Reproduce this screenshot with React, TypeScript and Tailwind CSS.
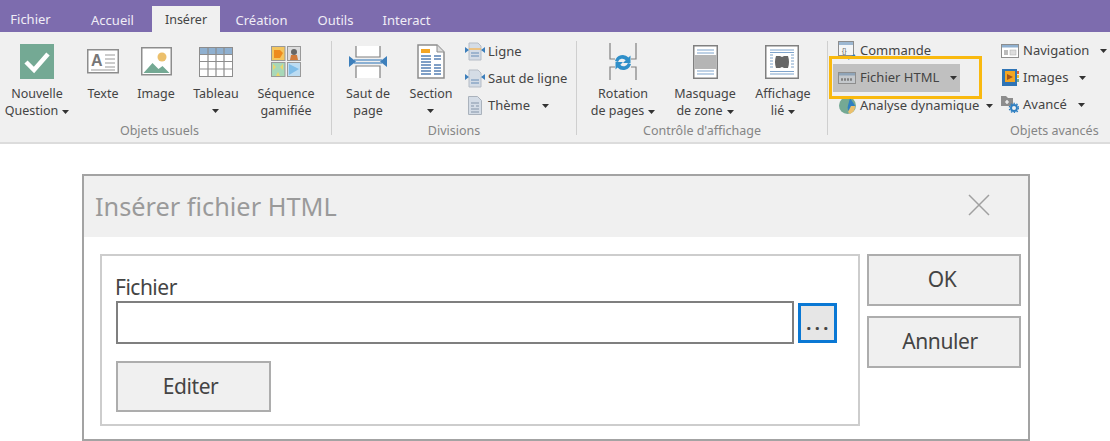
const font = { fontFamily: '"Noto Sans", "Open Sans", sans-serif' };

function Caret({ className = "" }: { className?: string }) {
  return (
    <svg width="7" height="4" viewBox="0 0 7 4" className={`inline-block ${className}`}>
      <path d="M0 0h7L3.5 4z" fill="#333" />
    </svg>
  );
}

function CheckIcon() {
  return (
    <svg width="34" height="35" viewBox="0 0 34 35">
      <rect width="34" height="35" fill="#74a994" />
      <path d="M6 18l8 8L28 10" fill="none" stroke="#fff" strokeWidth="4.5" />
    </svg>
  );
}
function TexteIcon() {
  return (
    <svg width="32" height="25" viewBox="0 0 32 25">
      <rect x="0.75" y="0.75" width="30.5" height="23" fill="#fff" stroke="#8d8d8d" strokeWidth="1.5" />
      <text x="4" y="17" fontSize="16" fontWeight="600" fill="#777" fontFamily="Liberation Sans">A</text>
      <path d="M18 6h10M18 10h10M18 14h10M18 18h10M4 21h24" stroke="#999" strokeWidth="1" />
    </svg>
  );
}
function ImageIcon() {
  return (
    <svg width="31" height="29" viewBox="0 0 31 29">
      <rect x="0.75" y="0.75" width="29.5" height="27" fill="#fff" stroke="#8d8d8d" strokeWidth="1.5" />
      <circle cx="21" cy="10" r="4.5" fill="#ecc06c" />
      <path d="M2.5 26l9-10 6 6 4-3 7 7z" fill="#74a994" />
    </svg>
  );
}
function TableauIcon() {
  return (
    <svg width="34" height="30" viewBox="0 0 34 30">
      <rect x="0.5" y="0.5" width="33" height="29" fill="#fff" stroke="#8d8d8d" />
      <rect x="1" y="1" width="32" height="6" fill="#8fb0d0" />
      <path d="M1 7.5h32M1 14.5h32M1 22h32M9 1v28M17 1v28M25 1v28" stroke="#8d8d8d" strokeWidth="1.2" />
    </svg>
  );
}
function SequenceIcon() {
  return (
    <svg width="30" height="31" viewBox="0 0 30 31">
      <rect x="0.5" y="0.5" width="13.5" height="14" fill="#f4c65f" stroke="#999" />
      <path d="M3 4h6l3 3-3 5H3z" fill="#ee8a1e" />
      <rect x="16.5" y="0.5" width="13" height="14" fill="#ddd" stroke="#999" />
      <circle cx="23" cy="6" r="3" fill="#666" />
      <path d="M19 14l1-5h6l1 5z" fill="#d07a3a" />
      <rect x="0.5" y="16.5" width="13.5" height="14" fill="#a8d8b8" stroke="#999" />
      <path d="M2 18l3 3-3 3zM12 18l-3 3 3 3zM7 26l2 4H5z" fill="#ecd56c" />
      <rect x="16.5" y="16.5" width="13" height="14" fill="#bcdcf2" stroke="#999" />
      <path d="M18 18l10 5-10 6z" fill="#7fbde8" />
    </svg>
  );
}
function SautPageIcon() {
  return (
    <svg width="38" height="32" viewBox="0 0 38 32">
      <path d="M7 0v11h24V0M7 32V20h24v12" fill="#fff" stroke="#808080" strokeWidth="1.2" />
      <path d="M5 14h28M5 17h28" stroke="#6a9bc9" strokeWidth="1.4" />
      <path d="M0 10l7 5.5L0 21zM38 10l-7 5.5 7 5.5z" fill="#3d7fbb" />
    </svg>
  );
}
function SectionIcon() {
  return (
    <svg width="28" height="35" viewBox="0 0 28 35">
      <path d="M1 1h19l7 7v26H1z" fill="#fff" stroke="#8d8d8d" strokeWidth="1.5" />
      <path d="M20 1v7h7" fill="#ddd" stroke="#8d8d8d" />
      <rect x="4" y="5" width="9" height="4" fill="#f5a623" />
      <path d="M4 12h10M4 15h10M4 18h10M4 21h10M4 24h10M4 27h10M4 30h10M17 12h7M17 15h7M17 21h7M17 24h7M17 27h7M17 30h7" stroke="#7f9fc6" strokeWidth="2" />
    </svg>
  );
}
function LigneIcon({ accent = "#f5b75a" }: { accent?: string }) {
  return (
    <svg width="20" height="19" viewBox="0 0 20 19">
      <path d="M4 1h9l3 3v14H4z" fill="#d4dce6" stroke="#b5bcc6" />
      <path d="M4 7h12" stroke={accent} strokeWidth="1.4" />
      <path d="M6 11h8M6 14h8" stroke="#8aa6c6" strokeWidth="1.4" />
      <path d="M0 5l4 3-4 3zM20 5l-4 3 4 3z" fill="#3d7fbb" />
    </svg>
  );
}
function ThemeIcon() {
  return (
    <svg width="14" height="19" viewBox="0 0 14 19">
      <path d="M.5.5h9l4 4v14H.5z" fill="#d4dce6" stroke="#aab2bc" />
      <path d="M3 7h8M3 10h3M8 10h3M3 13h8M3 16h8" stroke="#8494a8" />
    </svg>
  );
}
function RotationIcon() {
  return (
    <svg width="28" height="37" viewBox="0 0 28 37">
      <path d="M1 0v16h5M1 37V24h5" fill="none" stroke="#808080" strokeWidth="1.2" />
      <path d="M27 0v16h-5M27 37V24h-5" fill="none" stroke="#808080" strokeWidth="1.2" />
      <path d="M6 18a8 8 0 0 1 13.500-3.500l2-2v7.500h-7.500l2.700-2.700a4.500 4.500 0 0 0-7.700 1.700zM22 21a8 8 0 0 1-13.500 3.500l-2 2V19h7.500l-2.700 2.700a4.500 4.500 0 0 0 7.700-1.700z" fill="#2f8fc9" />
    </svg>
  );
}
function MasquageIcon() {
  return (
    <svg width="25" height="34" viewBox="0 0 25 34">
      <rect x="0.75" y="0.750" width="23.500" height="32.500" fill="#fff" stroke="#808080" strokeWidth="1.500" />
      <path d="M4 5h17M4 8h17M4 26h17M4 29h17" stroke="#7fa4cc" strokeWidth="1.200" />
      <rect x="1.500" y="10" width="22" height="14" fill="#b5b5b5" />
    </svg>
  );
}
function AffichageIcon() {
  return (
    <svg width="34" height="34" viewBox="0 0 34 34" className="mr-[2px]">
      <rect x="0.750" y="0.750" width="32.500" height="32.500" fill="#fff" stroke="#808080" strokeWidth="1.500" />
      <path d="M5 5h24M5 7.500h24M5 26.500h24M5 29h24M5 10h3M26 10h3M5 13h3M26 13h3M5 16h3M26 16h3M5 19h3M26 19h3M5 22h3M26 22h3" stroke="#7fa4cc" strokeWidth="1.200" />
      <path d="M11 11h4l2 1 2-1h4q2 6 0 12h-4l-2-1-2 1h-4q-2-6 0-12z" fill="#666" />
    </svg>
  );
}
function CommandeIcon() {
  return (
    <svg width="18" height="19" viewBox="0 0 18 19">
      <rect x="0.500" y="0.500" width="15" height="14" fill="#f4f6f8" stroke="#8d8d8d" />
      <rect x="1" y="1" width="14" height="3" fill="#9db8d2" />
      <text x="4" y="12" fontSize="6.500" fill="#555" fontFamily="Liberation Sans">{"{}"}</text>
      <path d="M10 18l7-4" stroke="#2f7fc1" strokeWidth="2" />
    </svg>
  );
}
function HtmlIcon() {
  return (
    <svg width="18" height="12" viewBox="0 0 18 12">
      <rect x="0.500" y="0.500" width="17" height="11" fill="#c4c8cc" stroke="#8d8d8d" />
      <rect x="1" y="1" width="16" height="2.500" fill="#8fa4b8" />
      <path d="M3 7.500h12" stroke="#808080" strokeWidth="2.500" strokeDasharray="2 1" />
    </svg>
  );
}
function AnalyseIcon() {
  return (
    <svg width="17" height="17" viewBox="0 0 17 17">
      <circle cx="8.500" cy="8.500" r="8.500" fill="#74a994" />
      <path d="M11 1l5 7.500-5 7c-2-2-3-4-2-7z" fill="#2f7fc1" />
      <path d="M9 15l3-6 4 0a8.500 8.500 0 0 1-5 8z" fill="#ecc06c" />
    </svg>
  );
}
function NavIcon() {
  return (
    <svg width="18" height="14" viewBox="0 0 18 14">
      <rect x="0.500" y="0.500" width="17" height="13" fill="#fff" stroke="#8d8d8d" />
      <rect x="1" y="1" width="16" height="2.500" fill="#8fb0d0" />
      <rect x="3" y="6" width="4" height="5" fill="#bbb" />
      <rect x="9" y="6" width="6" height="5" fill="#ddd" stroke="#aaa" strokeWidth="0.500" />
    </svg>
  );
}
function ImagesIcon() {
  return (
    <svg width="17" height="17" viewBox="0 0 17 17">
      <rect x="0" y="0" width="15" height="17" fill="#2f74b5" />
      <rect x="3" y="2" width="10" height="11" fill="#f5a623" />
      <path d="M5 5l6 3-6 3z" fill="#a4541a" />
      <rect x="15" y="2" width="2" height="3" fill="#e06a3a" />
      <rect x="15" y="6" width="2" height="3" fill="#f5c23a" />
      <rect x="15" y="10" width="2" height="3" fill="#74a994" />
    </svg>
  );
}
function AvanceIcon() {
  return (
    <svg width="18" height="17" viewBox="0 0 18 17">
      <path d="M0 0h5l2 2h5v8H0z" fill="#8d8d8d" />
      <path d="M6 4v4M4 6h4" stroke="#fff" strokeWidth="1.200" />
      <circle cx="13" cy="12" r="3" fill="none" stroke="#2f7fc1" strokeWidth="2" />
      <circle cx="13" cy="12" r="4.700" fill="none" stroke="#2f7fc1" strokeWidth="1.300" strokeDasharray="1.500 1.500" />
    </svg>
  );
}

function Big({ w, ml, icon, iconBox = "h-[37px]", lines, caret, caretLine }: { w: number | string; ml?: string; icon: React.ReactNode; iconBox?: string; lines: string[]; caret?: boolean; caretLine?: boolean }) {
  return (
    <div className={`flex flex-col items-center shrink-0 ${ml ?? ""}`} style={{ width: w }}>
      <div className={`flex items-center justify-center ${iconBox}`}>{icon}</div>
      <div className="mt-[5px] text-center text-[12.500px] leading-[17px] whitespace-nowrap text-[#444]">
        <div>{lines[0]}</div>
        {lines[1] && (
          <div>
            {lines[1]}
            {caret && <Caret className="ml-[4px] align-middle" />}
          </div>
        )}
        {caretLine && <div className="flex h-[17px] items-center justify-center"><Caret /></div>}
      </div>
    </div>
  );
}

function Small({ icon, label, caret, gap = "gap-[3px]", box = "w-[20px]", caretGap = "ml-[8px]" }: { icon: React.ReactNode; label: string; caret?: boolean; gap?: string; box?: string; caretGap?: string }) {
  return (
    <div className={`flex h-[27px] items-center whitespace-nowrap text-[13px] text-[#444] ${gap}`}>
      <div className={`flex justify-center ${box}`}>{icon}</div>
      <span>{label}</span>
      {caret && <Caret className={caretGap} />}
    </div>
  );
}

function GroupLabel({ children, className = "" }: { children: React.ReactNode; className?: string }) {
  return <div className={`mt-auto text-[12.500px] leading-[16px] text-[#858585] ${className}`}>{children}</div>;
}

function Tab({ children, active, className = "" }: { children: React.ReactNode; active?: boolean; className?: string }) {
  return (
    <div className={`flex h-[26px] items-center justify-center ${active ? "bg-[#f0f0f0] text-[12.500px] text-[#444]" : "text-[13px] text-[#f0edf6]"} ${className}`}>
      {children}
    </div>
  );
}

function DlgButton({ children, className = "" }: { children: React.ReactNode; className?: string }) {
  return (
    <div className={`flex items-center justify-center border-2 border-[#adadad] bg-[#f0f0f0] text-[21px] tracking-[-0.4px] text-[#444] ${className}`}>
      {children}
    </div>
  );
}

export default function App() {
  return (
    <div className="relative h-[441px] w-[1110px] overflow-hidden bg-white" style={font}>
      {/* Title bar with tabs */}
      <div className="flex h-[32px] items-end bg-[#7d6cae]">
        <Tab className="ml-[11px] w-[39px] pt-[1px]">Fichier</Tab>
        <Tab className="ml-[40px] w-[45px] pt-[3px]">Accueil</Tab>
        <Tab active className="ml-[17px] w-[68px] pt-[3px]">Insérer</Tab>
        <Tab className="ml-[16px] w-[51px] pt-[3px]">Création</Tab>
        <Tab className="ml-[31px] w-[35px] pt-[3px]">Outils</Tab>
        <Tab className="ml-[31px] w-[45px] pt-[3px]">Interact</Tab>
      </div>

      {/* Ribbon */}
      <div className="flex h-[112px] border-b-2 border-[#dcdcdc] bg-[#f0f0f0] pt-[9px]">
        <div className="flex h-[94px] w-[332px] shrink-0 flex-col items-center border-r border-[#cfcfcf]">
          <div className="flex w-full pl-[4px] pt-[2px]">
            <Big w={66} icon={<CheckIcon />} lines={["Nouvelle", "Question"]} caret />
            <Big w={46} ml="ml-[10px]" icon={<TexteIcon />} lines={["Texte"]} />
            <Big w={48} ml="ml-[6px]" icon={<ImageIcon />} lines={["Image"]} />
            <Big w={60} ml="ml-[6px]" icon={<TableauIcon />} lines={["Tableau"]} caretLine />
            <Big w={68} ml="ml-[6px]" icon={<SequenceIcon />} lines={["Séquence", "gamifiée"]} />
          </div>
          <GroupLabel className="mr-[12px] mb-[-4px]">Objets usuels</GroupLabel>
        </div>

        <div className="flex h-[94px] w-[245px] shrink-0 flex-col items-center border-r border-[#cfcfcf]">
          <div className="flex w-full pt-[2px]">
            <Big w={60} ml="ml-[6px]" icon={<SautPageIcon />} lines={["Saut de", "page"]} />
            <Big w={56} ml="ml-[5px]" icon={<SectionIcon />} lines={["Section"]} caretLine />
            <div className="ml-[6px] mt-[-5px] flex flex-col">
              <Small icon={<LigneIcon />} label="Ligne" box="w-[20px]" />
              <Small icon={<LigneIcon accent="#d4dce6" />} label="Saut de ligne" box="w-[20px]" />
              <Small icon={<ThemeIcon />} label="Thème" caret box="w-[20px]" caretGap="ml-[9px]" />
            </div>
          </div>
          <GroupLabel className="mb-[-4px]">Divisions</GroupLabel>
        </div>

        <div className="flex h-[94px] w-[251px] shrink-0 flex-col items-center border-r border-[#cfcfcf]">
          <div className="flex w-full pt-[2px]">
            <Big w={66} ml="ml-[13px]" icon={<RotationIcon />} lines={["Rotation", "de pages"]} caret />
            <Big w={78} ml="ml-[10px]" icon={<MasquageIcon />} lines={["Masquage", "de zone"]} caret />
            <Big w={66} ml="ml-[6px]" icon={<AffichageIcon />} lines={["Affichage", "lié"]} caret />
          </div>
          <GroupLabel className="mb-[-4px]">Contrôle d'affichage</GroupLabel>
        </div>

        <div className="flex h-[94px] flex-1 flex-col">
          <div className="flex">
            <div className="ml-[9px] mt-[-4px] flex w-[163px] shrink-0 flex-col">
              <Small icon={<CommandeIcon />} label="Commande" box="w-[20px]" />
              <div className="ml-[-4px] flex h-[28px] w-[127px] items-center gap-[3px] bg-[#c0c0c0] pl-[4px] text-[13px] text-[#444]">
                <div className="flex w-[20px] justify-center"><HtmlIcon /></div>
                <span className="whitespace-nowrap">Fichier HTML</span>
                <Caret className="ml-[8px]" />
              </div>
              <Small icon={<AnalyseIcon />} label="Analyse dynamique" caret box="w-[20px]" caretGap="ml-[4px]" />
            </div>
            <div className="mt-[-4px] flex flex-col">
              <Small icon={<NavIcon />} label="Navigation" caret box="w-[20px]" />
              <Small icon={<ImagesIcon />} label="Images" caret box="w-[20px]" />
              <Small icon={<AvanceIcon />} label="Avancé" caret box="w-[20px]" />
            </div>
          </div>
          <GroupLabel className="mb-[-4px] ml-[182px]">Objets avancés</GroupLabel>
        </div>
      </div>

      {/* Highlight */}
      <div className="absolute left-[829px] top-[56px] h-[43px] w-[153px] border-[3px] border-[#f9b90f]" />

      {/* Dialog */}
      <div className="ml-[82px] mt-[30px] flex h-[267px] w-[948px] flex-col border-2 border-[#a3a3a3] bg-white">
        <div className="flex h-[61px] shrink-0 items-center justify-between bg-[#f0f0f0] pl-[11px] pr-[38px]">
          <span className="text-[25.300px] text-[#9a9a9a]">Insérer fichier HTML</span>
          <svg width="22" height="22" viewBox="0 0 22 22" className="mb-[4px]">
            <path d="M1 1l20 20M21 1L1 21" stroke="#a0a0a0" strokeWidth="1.500" />
          </svg>
        </div>
        <div className="flex items-start pl-[16px] pt-[17px]">
          <div className="flex h-[172px] w-[760px] shrink-0 flex-col border-2 border-[#cdcdcd] pl-[14px] pt-[17px]">
            <div className="ml-[-1px] h-[28px] text-[21px] leading-[28px] tracking-[-0.5px] text-[#444]">Fichier</div>
            <div className="flex items-center">
              <div className="h-[43px] w-[678px] border-2 border-[#7f7f7f] bg-white" />
              <div className="ml-[4px] flex h-[40px] w-[39px] items-end justify-center border-[3px] border-[#0a78d4] bg-[#e6e6e6] pb-[8px] pl-[3px] text-[18px] font-bold leading-[18px] tracking-[3.500px] text-[#444]">...</div>
            </div>
            <DlgButton className="mt-[17px] h-[51px] w-[155px] pr-[6px]">Editer</DlgButton>
          </div>
          <div className="ml-[7px] flex flex-col gap-[10px]">
            <DlgButton className="h-[52px] w-[154px] pr-[4px]">OK</DlgButton>
            <DlgButton className="h-[52px] w-[154px] pr-[8px]">Annuler</DlgButton>
          </div>
        </div>
      </div>
    </div>
  );
}
